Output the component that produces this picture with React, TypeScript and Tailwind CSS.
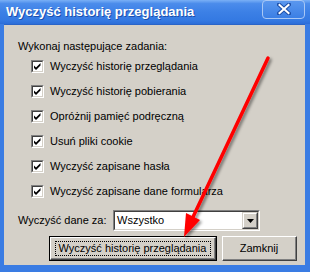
import { ReactNode } from "react";

const tasks = [
  "Wyczyść historię przeglądania",
  "Wyczyść historię pobierania",
  "Opróżnij pamięć podręczną",
  "Usuń pliki cookie",
  "Wyczyść zapisane hasła",
  "Wyczyść zapisane dane formularza",
];

function CheckBox() {
  return (
    <div className="w-[13px] h-[13px] shrink-0 border-t border-l border-t-[#808080] border-l-[#808080] border-b border-r border-b-white border-r-white">
      <div className="w-full h-full bg-white border-t border-l border-t-[#404040] border-l-[#404040] border-b border-r border-b-[#d4d0c8] border-r-[#d4d0c8] flex items-center justify-center">
        <svg width="9" height="9" viewBox="0 0 9 9">
          <path d="M1 3.5 L3 5.5 L7.5 1 L7.5 3.5 L3 8 L1 6 Z" fill="#000" />
        </svg>
      </div>
    </div>
  );
}

function RaisedButton({
  children,
  width,
  isDefault,
}: {
  children: ReactNode;
  width: string;
  isDefault?: boolean;
}) {
  return (
    <div className={`${width} h-[25px] shrink-0 ${isDefault ? "border border-black" : ""}`}>
      <div className="w-full h-full border-t border-l border-t-white border-l-white border-b border-r border-b-[#404040] border-r-[#404040]">
        <div className="w-full h-full border-b border-r border-b-[#808080] border-r-[#808080] flex items-center justify-center">
          {isDefault ? (
            <div className="w-[156px] h-[15px] flex items-center justify-center border border-dotted border-black text-[11px] leading-none whitespace-nowrap text-black">
              {children}
            </div>
          ) : (
            <span className="text-[11px] leading-none whitespace-nowrap text-black">{children}</span>
          )}
        </div>
      </div>
    </div>
  );
}

function ComboBox() {
  return (
    <div className="w-[147px] h-[21px] shrink-0 border-t border-l border-t-[#808080] border-l-[#808080] border-b border-r border-b-white border-r-white">
      <div className="w-full h-full bg-white border-t border-l border-t-[#404040] border-l-[#404040] border-b border-r border-b-[#d4d0c8] border-r-[#d4d0c8] flex items-center">
        <span className="flex-1 pl-[2px] text-[11px] leading-none text-black">Wszystko</span>
        <div className="w-[16px] h-[17px] bg-[#d4d0c8] border-t border-l border-t-[#d4d0c8] border-l-[#d4d0c8] border-b border-r border-b-[#404040] border-r-[#404040]">
          <div className="w-full h-full border-t border-l border-t-white border-l-white border-b border-r border-b-[#808080] border-r-[#808080] flex items-center justify-center">
            <svg width="7" height="4" viewBox="0 0 7 4">
              <path d="M0 0 H7 L3.5 4 Z" fill="#000" />
            </svg>
          </div>
        </div>
      </div>
    </div>
  );
}

export default function App() {
  return (
    <div className="w-[310px] h-[272px] relative overflow-hidden flex flex-col font-['Liberation_Sans',Arial,sans-serif] text-black">
      <div className="h-[24px] shrink-0 flex items-center justify-between pl-[6px] pr-[5px] bg-[linear-gradient(to_bottom,#7ab0f6_0%,#4b8ceb_15%,#3c80e6_50%,#3479e2_85%,#2c6dd8_100%)]">
        <span className="text-[13px] font-bold text-white leading-none whitespace-nowrap [text-shadow:1px_1px_0_#1c4fae] -mt-[1px]">
          Wyczyść historię przeglądania
        </span>
        <div className="w-[43px] h-[19px] -mt-[6px] rounded-[4px] border border-[#a9c8f5] bg-[linear-gradient(to_bottom,#5a97ee,#3b7fe5)] flex items-center justify-center">
          <svg width="14" height="12" viewBox="0 0 14 12">
            <path d="M2 1.5 L12 10.5 M12 1.5 L2 10.5" stroke="#1d4fa8" strokeWidth="4" strokeLinecap="square" />
            <path d="M2.5 2 L11.5 10 M11.5 2 L2.5 10" stroke="#fff" strokeWidth="2" strokeLinecap="square" />
          </svg>
        </div>
      </div>
      <div className="flex-1 flex flex-col bg-[#d4d0c8] border-l-[4px] border-r-[5px] border-b-[7px] border-[#3a7ce3]">
        <div className="flex-1 flex flex-col border-t border-t-[#2a64c8] pl-[14px]">
          <div className="mt-[15px] h-[13px] text-[11px] leading-[13px] whitespace-nowrap">Wykonaj następujące zadania:</div>
          <div className="mt-[7px] ml-[13px] flex flex-col gap-[12px]">
            {tasks.map((t) => (
              <div key={t} className="h-[13px] flex items-center gap-[6px]">
                <CheckBox />
                <span className="text-[11px] leading-none whitespace-nowrap">{t}</span>
              </div>
            ))}
          </div>
          <div className="mt-[12px] flex items-center">
            <span className="w-[95px] shrink-0 text-[11px] leading-none whitespace-nowrap">Wyczyść dane za:</span>
            <ComboBox />
          </div>
          <div className="mt-[5px] ml-[31px] flex gap-[5px]">
            <RaisedButton width="w-[168px]" isDefault>
              Wyczyść historię przeglądania
            </RaisedButton>
            <RaisedButton width="w-[75px]">Zamknij</RaisedButton>
          </div>
        </div>
      </div>
      <svg className="absolute inset-0 pointer-events-none" width="310" height="272" viewBox="0 0 310 272">
        <defs>
          <filter id="arrowShadow" x="-20%" y="-20%" width="140%" height="140%">
            <feDropShadow dx="2" dy="2" stdDeviation="1.5" floodColor="#000" floodOpacity="0.45" />
          </filter>
        </defs>
        <g filter="url(#arrowShadow)">
          <line x1="268" y1="58" x2="193" y2="217" stroke="#ff0000" strokeWidth="3.5" strokeLinecap="round" />
          <path d="M184 237 L200 220 L186 213 Z" fill="#ff0000" />
        </g>
      </svg>
    </div>
  );
}
